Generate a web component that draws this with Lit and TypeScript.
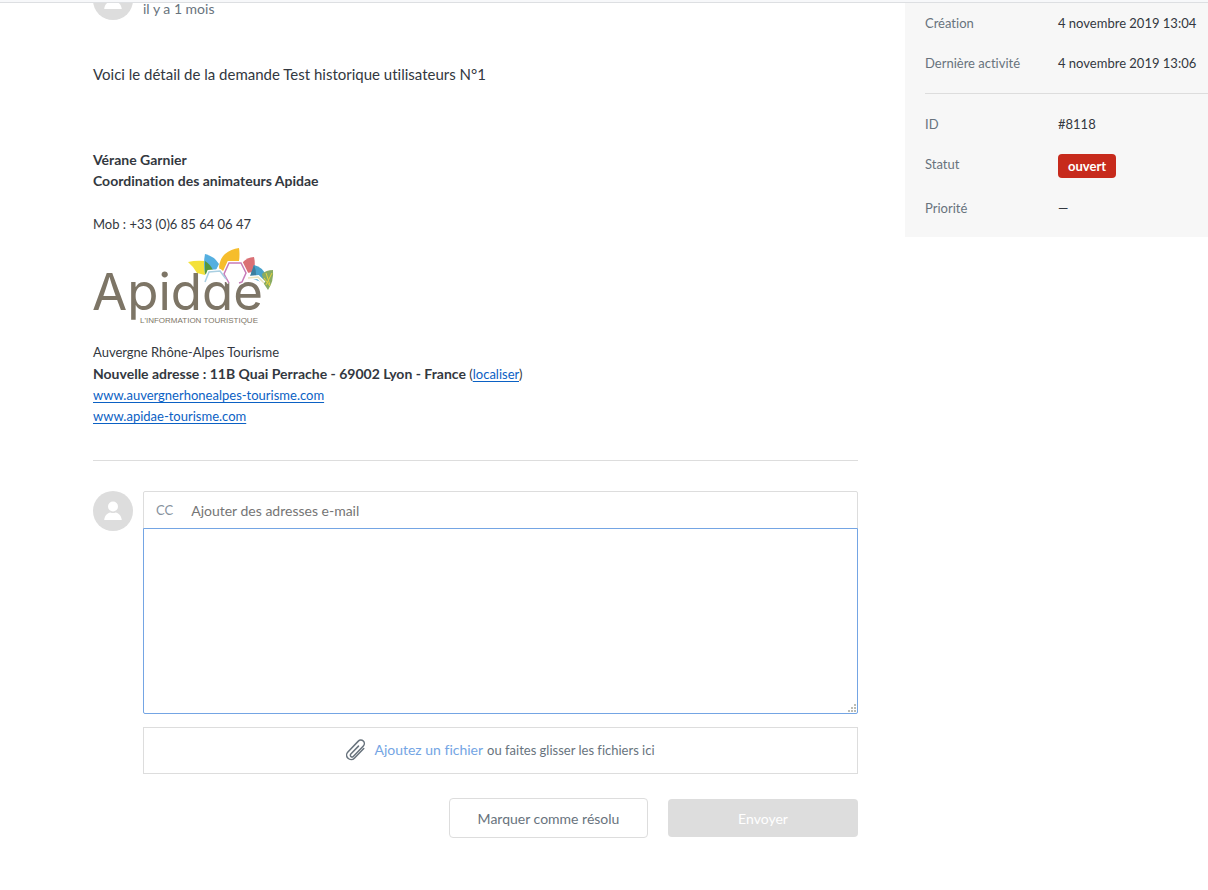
import { LitElement, html, css, svg } from "lit";
import { customElement } from "lit/decorators.js";

@customElement("user-avatar")
class UserAvatar extends LitElement {
  static styles = css`
    :host { display: block; width: 40px; height: 40px; flex: none; }
    svg { display: block; width: 100%; height: 100%; }
  `;
  render() {
    return html`<svg viewBox="0 0 40 40" aria-hidden="true">
      <circle cx="20" cy="20" r="20" fill="#ddd" />
      <circle cx="20" cy="15.5" r="5" fill="#fff" />
      <path d="M11.2 29c.5-4.600 3.200-7 6.300-7.500 1.600.8 3.400.8 5 0 3.100.5 5.800 2.900 6.300 7.500z" fill="#fff" />
    </svg>`;
  }
}

@customElement("apidae-logo")
class ApidaeLogo extends LitElement {
  static styles = css`
    :host { display: block; width: 183px; height: 80px; }
    svg { display: block; overflow: visible; }
    .word { font: 400 51px Inter, sans-serif; font-feature-settings: "cv11"; fill: #7d7566; }
    .tag { font: 400 8px "Liberation Sans", sans-serif; fill: #7d7566; }
  `;
  render() {
    return html`<svg width="183" height="80" viewBox="0 0 183 80" role="img" aria-label="Apidae, l'information touristique">
      <text class="word" x="-1" y="64">Apidae</text>
      ${svg`
      <path d="M95 16q8-2 17-1v14l-8-2q-4-7-9-11z" fill="#f4e13a" />
      <path d="M112 8q9 2 14 10l-3 6-9 3-2 1q-2-10 0-20z" fill="#55afe0" />
      <path d="M112 15q5 3 8 9l-7 5-1-2z" fill="#54973f" />
      <path d="M126 21q1-9 6-13 6-5 14-6 1 6 0 13l-10 1-5 9-4-1z" fill="#f6bd2c" />
      <path d="M149 17q5-6 12-6 2 8-1 15l-6 1-4-8z" fill="#da7075" />
      <path d="M161 19q9 2 12 11l-2 7-11-4-2-5z" fill="#49a2cc" />
      <path d="M161 19q3 7 2 14l-6-3z" fill="#3b7f9f" />
      <path d="M169 28q4-4 11-4 1 11-5 20l-4-6z" fill="#89ab62" />
      <path d="M173 27l4 12M171 32l6 8M179 27l-6 12" stroke="#e4d33f" fill="none" />
      <path d="M136 37l-5-9 5-11h12l5 10-4 9-3 1" stroke="#fff" stroke-width="4" fill="none" />
      <path d="M112 36l4-10 11-1 6 8" stroke="#fff" stroke-width="4" fill="none" />
      <path d="M155 32l10-1 6 6" stroke="#fff" stroke-width="4" fill="none" />
      <path d="M136 37l-5-9 5-11h12l5 10-4 9-3 1" stroke="#c77bb8" stroke-width="1.500" fill="none" />
      <path d="M112 36l4-10 11-1 6 8" stroke="#a9cfe2" stroke-width="1.500" fill="none" />
      <path d="M155 32l10-1 6 6" stroke="#e9e4bd" stroke-width="1.500" fill="none" />`}
      <text class="tag" x="47" y="77">L'INFORMATION TOURISTIQUE</text>
    </svg>`;
  }
}

@customElement("ticket-message")
class TicketMessage extends LitElement {
  static styles = css`
    :host { display: block; color: #333840; }
    .author { display: flex; gap: 10px; align-items: flex-end; }
    .date { font-size: 14px; line-height: 20px; padding-bottom: 1px; color: #68737d; }
    .body { padding-top: 43px; }
    p { margin: 0; font-size: 13px; line-height: 21px; }
    b, .name { font-size: 14px; font-weight: 700; }
    .lead { font-size: 15px; line-height: 22px; }
    .name { padding-top: 64px; }
    .phone { padding-top: 23px; }
    apidae-logo { margin: 11px 0 16px; }
    a { color: #0b61c4; text-underline-offset: 2px; }
  `;
  render() {
    return html`
      <div class="author"><user-avatar></user-avatar><time class="date">il y a 1 mois</time></div>
      <div class="body">
        <p class="lead">Voici le détail de la demande Test historique utilisateurs N°1</p>
        <p class="name">Vérane Garnier<br />Coordination des animateurs Apidae</p>
        <p class="phone">Mob : +33 (0)6 85 64 06 47</p>
        <apidae-logo></apidae-logo>
        <p>
          Auvergne Rhône-Alpes Tourisme<br />
          <b>Nouvelle adresse : 11B Quai Perrache - 69002 Lyon - France</b> (<a href="#">localiser</a>)<br />
          <a href="#">www.auvergnerhonealpes-tourisme.com</a><br />
          <a href="#">www.apidae-tourisme.com</a>
        </p>
      </div>`;
  }
}

@customElement("reply-form")
class ReplyForm extends LitElement {
  static styles = css`
    :host { display: block; }
    * { box-sizing: border-box; }
    form { display: flex; gap: 10px; margin: 0; }
    .fields { flex: 1; min-width: 0; }
    .cc { display: flex; align-items: center; height: 38px; padding: 0 12px; gap: 18px; border: 1px solid #ddd; border-radius: 2px 2px 0 0; font-size: 13px; color: #87929d; }
    .cc input { flex: 1; min-width: 0; border: 0; outline: 0; padding: 0; font: inherit; font-size: 14px; background: none; }
    .cc input::placeholder { color: #757575; opacity: 1; }
    .editor { position: relative; margin-top: -1px; }
    textarea { display: block; width: 100%; height: 186px; border: 1px solid #74a5e4; border-radius: 0 0 2px 2px; outline: 0; resize: none; padding: 10px; font: inherit; background: #fff; }
    .grip { position: absolute; right: 2px; bottom: 2px; pointer-events: none; }
    .drop { display: flex; align-items: center; justify-content: center; height: 47px; margin-top: 13px; padding-bottom: 2px; border: 1px solid #ddd; color: #68737d; font-size: 13px; cursor: pointer; }
    .drop svg { margin-right: 8px; }
    .drop .pick { margin-right: 4px; font-size: 14px; color: #74a5e4; }
    .drop input { display: none; }
    .actions { display: flex; justify-content: flex-end; align-items: center; gap: 20px; margin-top: 24px; }
    button { font: inherit; font-size: 14px; border-radius: 4px; padding: 0; }
    .solve { width: 199px; height: 40px; border: 1px solid #ddd; background: #fff; color: #68737d; }
    .send { width: 190px; height: 38px; border: 0; background: #ddd; color: #fff; }
  `;
  render() {
    return html`<form @submit=${(e: Event) => e.preventDefault()}>
      <user-avatar></user-avatar>
      <div class="fields">
        <div class="cc"><label for="cc">CC</label><input id="cc" type="text" placeholder="Ajouter des adresses e-mail" /></div>
        <div class="editor">
          <textarea aria-label="Commentaire"></textarea>
          <svg class="grip" width="8" height="8" viewBox="0 0 8 8" fill="#bdbdb4" aria-hidden="true">
            <path d="M6 0h2v2h-2zM3 3h2v2h-2zM6 3h2v2h-2zM0 6h2v2h-2zM3 6h2v2h-2zM6 6h2v2h-2z" />
          </svg>
        </div>
        <label class="drop">
          <svg width="20" height="22" viewBox="-10 -11 20 22" fill="none" stroke="#68737d" stroke-width="1.500" stroke-linecap="round" aria-hidden="true">
            <path transform="rotate(44)" d="M4.500-6.500V7a4.500 4.500 0 0 1-9 0V-8a3.500 3.500 0 0 1 7 0V6.500a1.700 1.700 0 0 1-3.400 0V-4.500" />
          </svg>
          <input type="file" multiple />
          <span class="pick">Ajoutez un fichier</span><span>ou faites glisser les fichiers ici</span>
        </label>
        <div class="actions">
          <button class="solve" type="button">Marquer comme résolu</button>
          <button class="send" type="submit" disabled>Envoyer</button>
        </div>
      </div>
    </form>`;
  }
}

@customElement("ticket-details")
class TicketDetails extends LitElement {
  static styles = css`
    :host { display: block; background: #f7f7f7; padding: 0 0 9px 20px; font-size: 13px; line-height: 20px; color: #333840; }
    dl { display: grid; grid-template-columns: 113px 1fr; column-gap: 20px; margin: 0; }
    dt, dd { margin: 0; padding: 10px 0; }
    dt { color: #68737d; }
    .more { border-top: 1px solid #ddd; margin-top: 10px; padding-top: 10px; }
    .badge { display: block; width: max-content; padding: 0 10px; border-radius: 4px; line-height: 24px; font-weight: 700; color: #fff; background: #c72a1c; }
  `;
  render() {
    return html`
      <dl>
        <dt>Création</dt><dd>4 novembre 2019 13:04</dd>
        <dt>Dernière activité</dt><dd>4 novembre 2019 13:06</dd>
      </dl>
      <dl class="more">
        <dt>ID</dt><dd>#8118</dd>
        <dt>Statut</dt><dd><span class="badge">ouvert</span></dd>
        <dt>Priorité</dt><dd>—</dd>
      </dl>`;
  }
}

@customElement("app-root")
class AppRoot extends LitElement {
  static styles = css`
    :host { display: block; min-height: 100vh; background: #fff; font-family: "Trebuchet MS", Lato, sans-serif; font-variant-ligatures: none; }
    .topbar { height: 2px; background: #f7f8fa; border-bottom: 1px solid #dddfe2; position: relative; z-index: 1; }
    .page { display: grid; grid-template-columns: minmax(0, 1fr) 303px; align-items: start; }
    main { padding: 0 47px 0 93px; }
    ticket-message { margin-top: -23px; }
    hr { margin: 33px 0 30px; border: 0; border-top: 1px solid #ddd; }
  `;
  render() {
    return html`
      <header class="topbar"></header>
      <div class="page">
        <main>
          <ticket-message></ticket-message>
          <hr />
          <reply-form></reply-form>
        </main>
        <ticket-details></ticket-details>
      </div>`;
  }
}
